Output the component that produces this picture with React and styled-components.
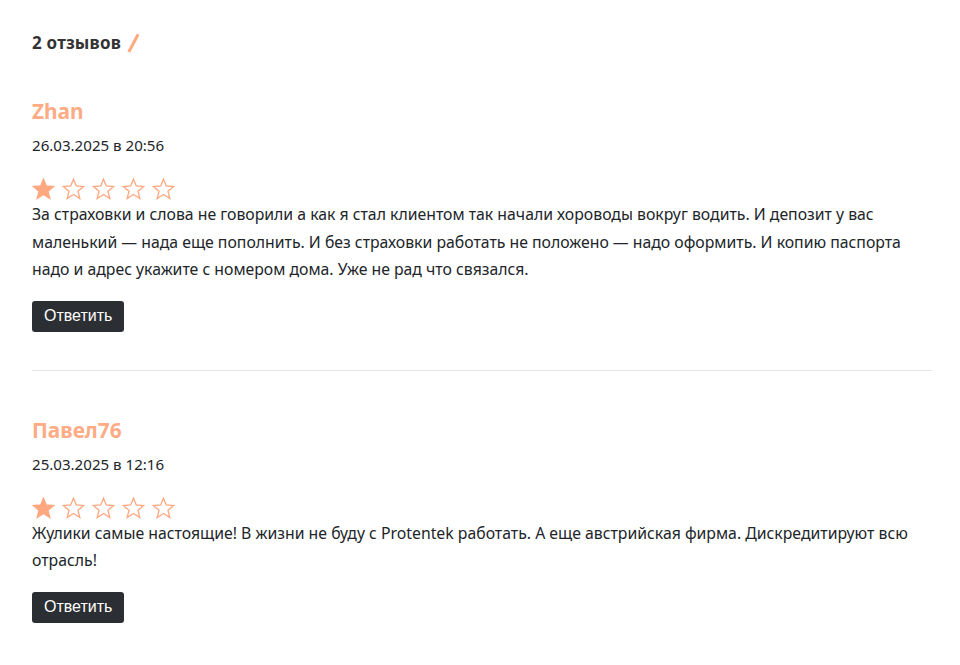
import React from "react";
import styled, { createGlobalStyle } from "styled-components";

const Global = createGlobalStyle`
  html, body { margin: 0; padding: 0; background: #fff; }
  body { font-family: "Noto Sans", "Open Sans", sans-serif; color: #212529; }
`;

const Page = styled.div`
  padding: 31px 28px 0 32px;
  width: 900px;
`;

const Heading = styled.h3`
  margin: 0 0 43px;
  font-family: "Noto Sans", sans-serif;
  font-size: 17px;
  font-weight: 700;
  line-height: 24px;
  color: #333;
  display: flex;
  align-items: center;
  gap: 6px;
  letter-spacing: 0.2px;
`;

const Slash = styled.span`
  display: inline-block;
  width: 2.5px;
  height: 20px;
  background: #ffa97f;
  transform: rotate(28deg);
  margin-left: 5px;
`;

const Review = styled.article`
  padding-bottom: 38px;
  border-bottom: ${(p) => (p.$last ? "none" : "1px solid #e6e6e6")};
  margin-bottom: ${(p) => (p.$last ? "0" : "46px")};
`;

const Name = styled.div`
  font-size: 20.8px;
  font-weight: 700;
  line-height: 26px;
  color: #ffab85;
`;

const DateLine = styled.div`
  margin-top: 10px;
  font-size: 15.1px;
  line-height: 22px;
`;

const Stars = styled.div`
  display: flex;
  gap: 7px;
  margin-top: 22px;
`;

const Text = styled.p`
  margin: 1px 0 0;
  font-size: 15.8px;
  line-height: 27.5px;
`;

const Button = styled.button`
  display: block;
  margin-top: 17px;
  height: 31px;
  background: #2b2f33;
  color: #fff;
  border: none;
  border-radius: 3px;
  font-family: "Liberation Sans", Arial, sans-serif;
  font-size: 16px;
  line-height: 20px;
  padding: 0 12px;
  cursor: pointer;
`;

const Star = ({ filled }) => (
  <svg width="23" height="22" viewBox="0 0 24 23">
    <path
      d="M12 1.2 L14.9 8.3 L22.6 8.9 L16.7 13.9 L18.6 21.4 L12 17.3 L5.4 21.4 L7.3 13.9 L1.4 8.9 L9.1 8.3 Z"
      fill={filled ? "#ffa880" : "none"}
      stroke="#ffa880"
      strokeWidth="1.4"
      strokeLinejoin="miter"
    />
  </svg>
);

const reviews = [
  {
    name: "Zhan",
    date: "26.03.2025 в 20:56",
    rating: 1,
    text:
      "За страховки и слова не говорили а как я стал клиентом так начали хороводы вокруг водить. И депозит у вас маленький — нада еще пополнить. И без страховки работать не положено — надо оформить. И копию паспорта надо и адрес укажите с номером дома. Уже не рад что связался.",
  },
  {
    name: "Павел76",
    date: "25.03.2025 в 12:16",
    rating: 1,
    text:
      "Жулики самые настоящие! В жизни не буду с Protentek работать. А еще австрийская фирма. Дискредитируют всю отрасль!",
  },
];

export default function App() {
  return (
    <>
      <Global />
      <Page>
        <Heading>
          2 отзывов <Slash />
        </Heading>
        {reviews.map((r, i) => (
          <Review key={i} $last={i === reviews.length - 1}>
            <Name>{r.name}</Name>
            <DateLine>{r.date}</DateLine>
            <Stars>
              {[0, 1, 2, 3, 4].map((k) => (
                <Star key={k} filled={k < r.rating} />
              ))}
            </Stars>
            <Text>{r.text}</Text>
            <Button>Ответить</Button>
          </Review>
        ))}
      </Page>
    </>
  );
}
